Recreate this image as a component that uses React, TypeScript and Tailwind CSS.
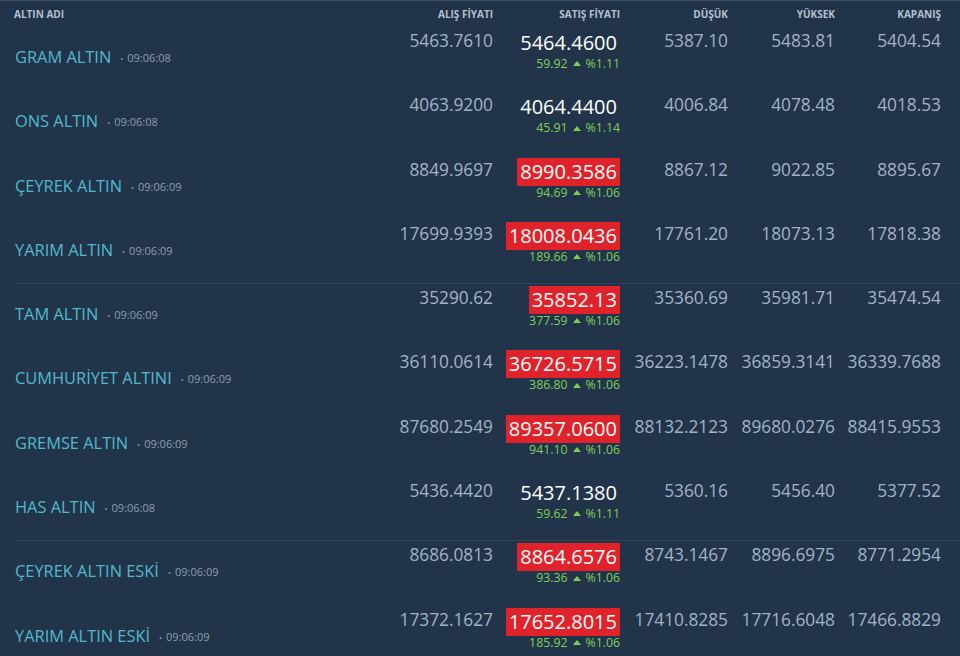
import React from "react";

interface GoldRow {
  name: string;
  time: string;
  buy: string;
  sell: string;
  change: string;
  pct: string;
  low: string;
  high: string;
  close: string;
  flash?: boolean;
  divider?: boolean;
}

const rows: GoldRow[] = [
  { name: "GRAM ALTIN", time: "09:06:08", buy: "5463.7610", sell: "5464.4600", change: "59.92", pct: "%1.11", low: "5387.10", high: "5483.81", close: "5404.54" },
  { name: "ONS ALTIN", time: "09:06:08", buy: "4063.9200", sell: "4064.4400", change: "45.91", pct: "%1.14", low: "4006.84", high: "4078.48", close: "4018.53" },
  { name: "ÇEYREK ALTIN", time: "09:06:09", buy: "8849.9697", sell: "8990.3586", change: "94.69", pct: "%1.06", low: "8867.12", high: "9022.85", close: "8895.67", flash: true },
  { name: "YARIM ALTIN", time: "09:06:09", buy: "17699.9393", sell: "18008.0436", change: "189.66", pct: "%1.06", low: "17761.20", high: "18073.13", close: "17818.38", flash: true },
  { name: "TAM ALTIN", time: "09:06:09", buy: "35290.62", sell: "35852.13", change: "377.59", pct: "%1.06", low: "35360.69", high: "35981.71", close: "35474.54", flash: true, divider: true },
  { name: "CUMHURİYET ALTINI", time: "09:06:09", buy: "36110.0614", sell: "36726.5715", change: "386.80", pct: "%1.06", low: "36223.1478", high: "36859.3141", close: "36339.7688", flash: true },
  { name: "GREMSE ALTIN", time: "09:06:09", buy: "87680.2549", sell: "89357.0600", change: "941.10", pct: "%1.06", low: "88132.2123", high: "89680.0276", close: "88415.9553", flash: true },
  { name: "HAS ALTIN", time: "09:06:08", buy: "5436.4420", sell: "5437.1380", change: "59.62", pct: "%1.11", low: "5360.16", high: "5456.40", close: "5377.52" },
  { name: "ÇEYREK ALTIN ESKİ", time: "09:06:09", buy: "8686.0813", sell: "8864.6576", change: "93.36", pct: "%1.06", low: "8743.1467", high: "8896.6975", close: "8771.2954", flash: true, divider: true },
  { name: "YARIM ALTIN ESKİ", time: "09:06:09", buy: "17372.1627", sell: "17652.8015", change: "185.92", pct: "%1.06", low: "17410.8285", high: "17716.6048", close: "17466.8829", flash: true },
];

const cols = "grid grid-cols-[1fr_110px_127px_108px_107px_106px] pr-[19px]";
const num = "text-right text-[17.3px] leading-[26px] text-[#a3b3c6]";

function UpArrow() {
  return (
    <svg width="8" height="5" viewBox="0 0 8 5" className="mx-[5px] mb-[2px] inline-block">
      <path d="M0 5 L4 0 L8 5 Z" fill="#7fcf55" />
    </svg>
  );
}

function Row({ r }: { r: GoldRow }) {
  return (
    <div className="relative h-[64.3px]">
      {r.divider && <div className="absolute left-4 right-0 top-[-2px] h-px bg-[#2f4258]" />}
      <div className={`${cols} h-full`}>
        <div className="flex items-start pl-[15px] pt-[19px]">
          <span className="text-[16.4px] leading-[20px] text-[#50bacb]">{r.name}</span>
          <span className="ml-[9px] mt-[4px] text-[11px] leading-[14px] text-[#8c9db1]">
            <span className="mr-[4px] text-[8px]">•</span>
            {r.time}
          </span>
        </div>
        <div className={num}>{r.buy}</div>
        <div className="flex flex-col items-end">
          <span
            className={`mt-px px-[3px] text-[20px] leading-[28px] text-white ${r.flash ? "bg-[#e0232a]" : ""}`}
          >
            {r.sell}
          </span>
          <span className="text-[12.3px] leading-[13px] text-[#7fcf55]">
            {r.change}
            <UpArrow />
            {r.pct}
          </span>
        </div>
        <div className={num}>{r.low}</div>
        <div className={num}>{r.high}</div>
        <div className={num}>{r.close}</div>
      </div>
    </div>
  );
}

export default function App() {
  return (
    <div
      className="h-[656px] w-[960px] overflow-hidden border-t border-[#3b4d62] bg-[#22344a]"
      style={{ fontFamily: '"Open Sans", "Noto Sans", sans-serif' }}
    >
      {/* Header */}
      <div className={`${cols} h-[27px] items-center text-[10px] font-bold text-[#b2c0d1]`}>
        <div className="pl-[14px]">ALTIN ADI</div>
        <div className="text-right">ALIŞ FİYATI</div>
        <div className="text-right">SATIŞ FİYATI</div>
        <div className="text-right">DÜŞÜK</div>
        <div className="text-right">YÜKSEK</div>
        <div className="text-right">KAPANIŞ</div>
      </div>

      {rows.map((r) => (
        <Row key={r.name} r={r} />
      ))}
    </div>
  );
}
